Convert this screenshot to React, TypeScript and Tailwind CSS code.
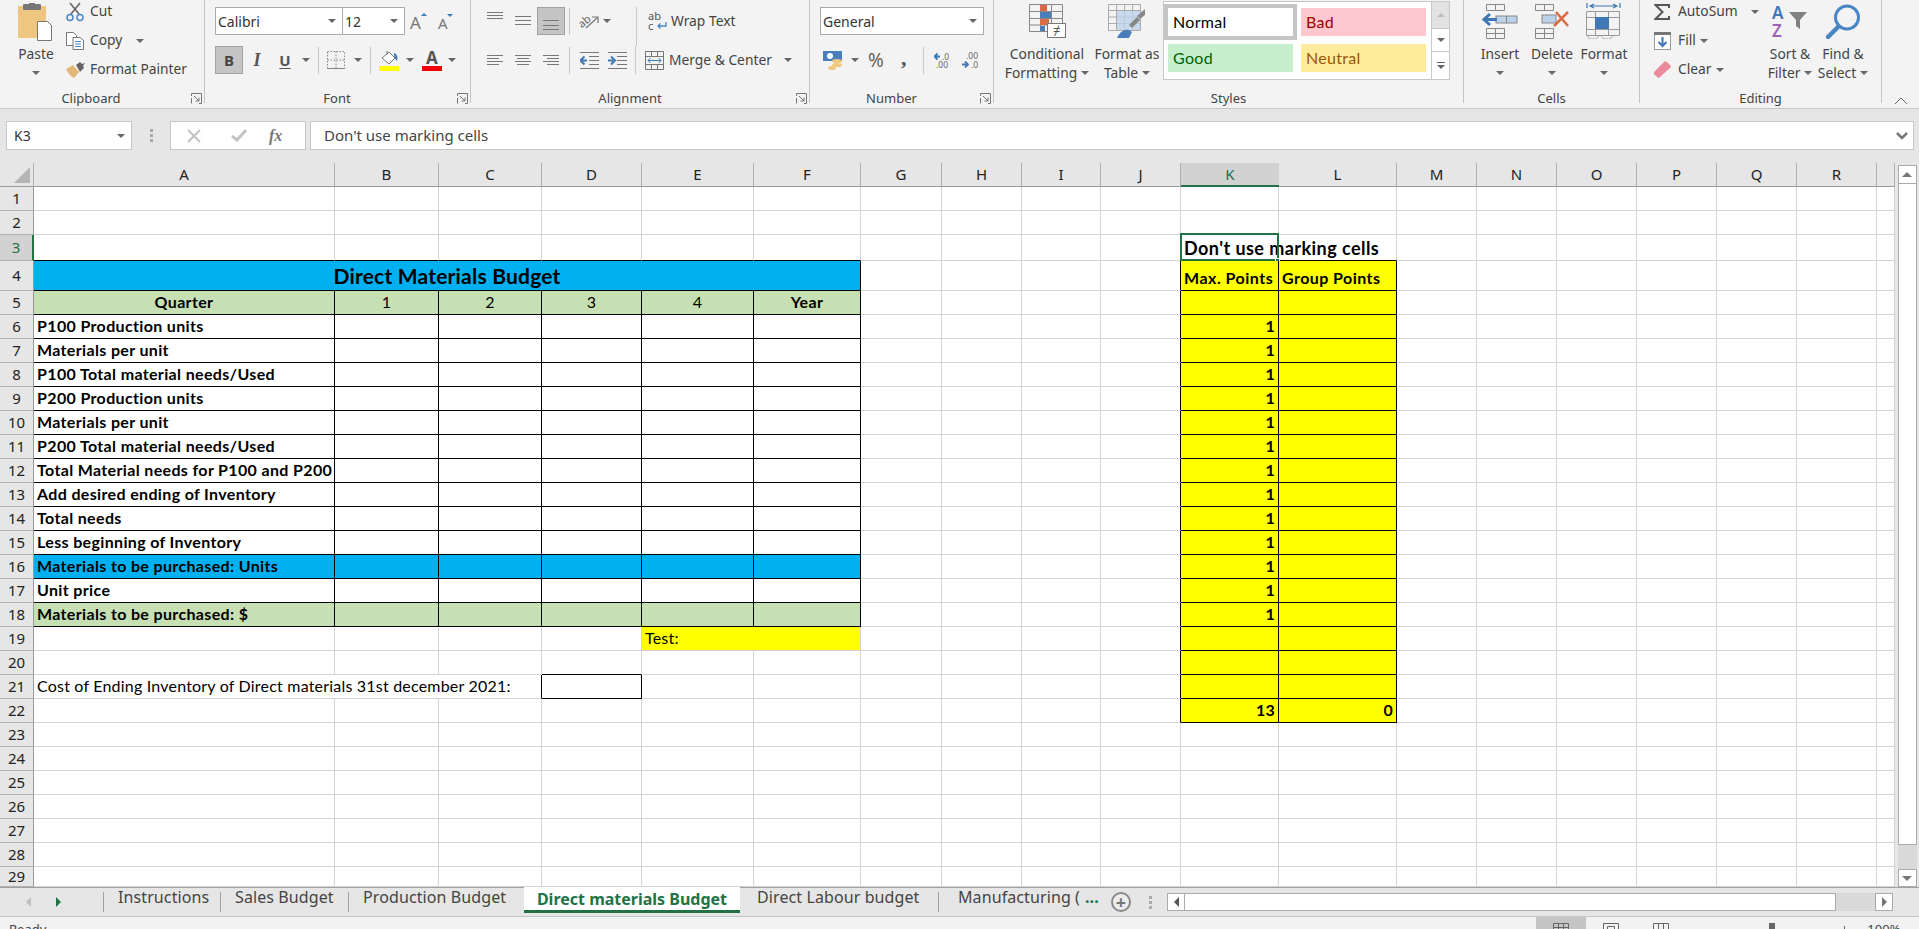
import type { ReactNode } from 'react';

const gridCols = ['A', 'B', 'C', 'D', 'E', 'F', 'G', 'H', 'I', 'J', 'K', 'L', 'M', 'N', 'O', 'P', 'Q', 'R', ''];
const rowNums = Array.from({ length: 29 }, (_, i) => i + 1);

const labels: Record<number, string> = {
  6: 'P100 Production units',
  7: 'Materials per unit',
  8: 'P100 Total material needs/Used',
  9: 'P200 Production units',
  10: 'Materials per unit',
  11: 'P200 Total material needs/Used',
  12: 'Total Material needs for P100 and P200',
  13: 'Add desired ending of Inventory',
  14: 'Total needs',
  15: 'Less beginning of Inventory',
  16: 'Materials to be purchased: Units',
  17: 'Unit price',
  18: 'Materials to be purchased: $',
};

const boxed = (r: number, c: number) =>
  (r >= 4 && r <= 18 && c >= 0 && c <= 5) || (r >= 4 && r <= 22 && (c === 10 || c === 11)) || (r === 21 && c === 3);

function Caret({ className = '' }: { className?: string }) {
  return <span className={`inline-block h-0 w-0 border-x-[4px] border-t-[4px] border-x-transparent border-t-[#666] ${className}`} />;
}

function Group({ className, label, labelClass = '', launcher = true, children }: { className: string; label: string; labelClass?: string; launcher?: boolean; children: ReactNode }) {
  return (
    <div className={`flex h-[103px] shrink-0 flex-col border-r border-[#c4c4c4] ${className}`}>
      <div className="h-[90px]">{children}</div>
      <div className="flex h-[13px] items-center pt-[3px] text-[13px] leading-none text-[#444]">
        <span className={`flex-1 text-center ${labelClass}`}>{label}</span>
        {launcher && (
          <svg width="11" height="11" viewBox="0 0 11 11" className="mr-[2px]" fill="none" stroke="#777">
            <path d="M.5 3V.5h10v10H8M.5 5v5.5H.5" />
            <path d="M3 3l5 5M8 4.5V8H4.5" />
          </svg>
        )}
      </div>
    </div>
  );
}

function Sep({ className = 'h-[27px]' }: { className?: string }) {
  return <div className={`w-px shrink-0 bg-[#c8c8c8] ${className}`} />;
}

function Combo({ className, text }: { className: string; text: string }) {
  return (
    <div className={`flex h-[28px] items-center justify-between border border-[#ababab] bg-white pl-[2px] pr-[6px] text-[14px] text-[#333] ${className}`}>
      <span>{text}</span>
      <Caret />
    </div>
  );
}

function Btn({ className = 'w-[28px]', children }: { className?: string; children: ReactNode }) {
  return <div className={`flex h-[28px] shrink-0 items-center justify-center ${className}`}>{children}</div>;
}

function SmallCmd({ icon, text, caret, caretClass = 'ml-[5px]', className = '' }: { icon: ReactNode; text: string; caret?: boolean; caretClass?: string; className?: string }) {
  return (
    <div className={`flex h-[29px] items-center whitespace-nowrap text-[13.8px] text-[#444] ${className}`}>
      <span className="flex w-[24px] shrink-0 items-center">{icon}</span>
      <span>{text}</span>
      {caret && <Caret className={caretClass} />}
    </div>
  );
}

function BigBtn({ className, icon, line1, line2, caret = true }: { className: string; icon: ReactNode; line1: string; line2?: string; caret?: boolean }) {
  return (
    <div className={`flex shrink-0 flex-col items-center text-[13.8px] leading-[19px] text-[#444] ${className}`}>
      <div className="flex h-[44px] items-start justify-center pt-[4px]">{icon}</div>
      <div className="whitespace-nowrap">{line1}</div>
      <div className="flex h-[19px] items-center gap-[4px] whitespace-nowrap">
        {line2 && <span>{line2}</span>}
        {caret && <Caret />}
      </div>
    </div>
  );
}

const vLines = { top: [3.5, 6.5, 9.5], mid: [7.5, 11.5, 15.5], bot: [11.5, 16.5, 20.5] };

function VAlignIcon({ kind }: { kind: 'top' | 'mid' | 'bot' }) {
  return (
    <svg width="18" height="24" viewBox="0 0 18 24" stroke="#777">
      {vLines[kind].map((y) => (
        <line key={y} x1="1" x2="17" y1={y} y2={y} />
      ))}
    </svg>
  );
}

function HAlignIcon({ kind }: { kind: 'left' | 'center' | 'right' }) {
  return (
    <svg width="16" height="11" viewBox="0 0 16 11" stroke="#777">
      {[0.5, 3.5, 6.5, 9.5].map((y, i) => {
        const short = i % 2 === 1;
        const x1 = kind === 'left' ? 0 : kind === 'center' ? (short ? 2 : 0) : short ? 4 : 0;
        const x2 = kind === 'left' ? (short ? 12 : 16) : kind === 'center' ? (short ? 14 : 16) : 16;
        return <line key={y} x1={x1} x2={x2} y1={y} y2={y} />;
      })}
    </svg>
  );
}

function IndentIcon({ flip }: { flip?: boolean }) {
  return (
    <svg width="19" height="17" viewBox="0 0 19 17" fill="none">
      <path d="M0 .5h19M9 4.5h10M9 8.5h10M9 12.5h10M0 16.5h19" stroke="#777" />
      {flip ? <path d="M0 8.5h5M3 4.5l4 4-4 4" stroke="#3f78b5" strokeWidth="2" /> : <path d="M7 8.5H2M4.5 4.5l-4 4 4 4" stroke="#3f78b5" strokeWidth="2" />}
    </svg>
  );
}

function ClipboardGroup() {
  return (
    <Group className="w-[205px]" label="Clipboard" labelClass="pr-[9px]">
      <div className="flex">
        <div className="flex w-[66px] flex-col items-center pl-[6px] pt-[3px] text-[13.8px] text-[#444]">
          <svg width="36" height="38" viewBox="0 0 36 38">
            <rect x="0" y="3" width="28" height="32" fill="#eec67f" />
            <rect x="5" y="1" width="18" height="6" rx="1" fill="#777" />
            <rect x="11" y="0" width="6" height="3" fill="#777" />
            <path d="M19.5 18.5h10l4 4v15h-14z" fill="#fff" stroke="#777" />
          </svg>
          <span className="mt-[3px] leading-[19px]">Paste</span>
          <Caret className="mt-[8px]" />
        </div>
        <div className="-mt-[3px]">
          <SmallCmd
            text="Cut"
            icon={
              <svg width="18" height="20" viewBox="0 0 18 20" fill="none">
                <path d="M5 12L14 1M13 12L4 1" stroke="#666" strokeWidth="1.6" />
                <circle cx="4" cy="15.5" r="3" stroke="#4a86c5" strokeWidth="1.5" />
                <circle cx="14" cy="15.5" r="3" stroke="#4a86c5" strokeWidth="1.5" />
              </svg>
            }
          />
          <SmallCmd
            text="Copy"
            caret
            caretClass="ml-[14px]"
            icon={
              <svg width="18" height="18" viewBox="0 0 18 18" fill="none">
                <path d="M7 13.5H.5V.5h7l3 3v2" stroke="#777" fill="#fff" />
                <path d="M7 5.5h7l3.5 3v9H7z" fill="#fff" stroke="#777" />
                <path d="M9 9.5h6M9 12h6M9 14.5h6" stroke="#4a86c5" />
              </svg>
            }
          />
          <SmallCmd
            text="Format Painter"
            icon={
              <svg width="19" height="16" viewBox="0 0 19 16">
                <path d="M0 7l7-4 6 7-5 6C5 15 2 11 0 7z" fill="#e3b877" />
                <path d="M10 3l4-3 2 2 3-1-2 3 1 2-4 4z" fill="#666" />
              </svg>
            }
          />
        </div>
      </div>
    </Group>
  );
}

function FontGroup() {
  return (
    <Group className="w-[266px] pl-[10px]" label="Font" labelClass="pl-[2px]">
      <div className="flex items-center pt-[7px]">
        <Combo className="w-[128px]" text="Calibri" />
        <Combo className="-ml-px w-[63px]" text="12" />
        <svg width="20" height="20" viewBox="0 0 20 20" className="ml-[5px]">
          <text x="0" y="18" fontSize="17" fill="#777" fontFamily="Noto Sans">A</text>
          <path d="M11 5l3-3 3 3z" fill="#3f78b5" />
        </svg>
        <svg width="20" height="20" viewBox="0 0 20 20" className="ml-[7px]">
          <text x="1" y="18" fontSize="15" fill="#777" fontFamily="Noto Sans">A</text>
          <path d="M10 3l3 3 3-3z" fill="#3f78b5" />
        </svg>
      </div>
      <div className="mt-[11px] flex items-center">
        <div className="flex h-[28px] w-[28px] items-center justify-center border border-[#a2a2a2] bg-[#c5c5c5] text-[15px] font-bold text-[#444]">B</div>
        <Btn><span className="font-['Liberation_Serif',serif] text-[18px] font-bold italic text-[#555]">I</span></Btn>
        <Btn><span className="text-[15px] font-bold text-[#555] underline underline-offset-2">U</span></Btn>
        <Caret className="ml-[3px]" />
        <Sep className="ml-[8px] h-[27px]" />
        <svg width="18" height="18" viewBox="0 0 18 18" fill="none" stroke="#888" className="ml-[8px]">
          <path d="M.5.5h17v17H.5zM9 .5v17M.5 9h17" strokeDasharray="1.5 1.5" />
          <path d="M.5 17.5h17" />
        </svg>
        <Caret className="ml-[9px]" />
        <Sep className="ml-[8px] h-[27px]" />
        <div className="ml-[8px] flex w-[20px] flex-col items-center">
          <svg width="20" height="15" viewBox="0 0 20 15" fill="none">
            <path d="M3 8l7-6 6 6-6 6z" stroke="#777" fill="#fff" />
            <path d="M8 1v4" stroke="#777" />
            <path d="M15 3c3 1 4 4 3 8-1-1-3-3-3-8z" fill="#3f78b5" />
          </svg>
          <div className="mt-[1px] h-[5px] w-[20px] bg-[#ffff00]" />
        </div>
        <Caret className="ml-[7px]" />
        <div className="ml-[8px] flex w-[20px] flex-col items-center">
          <span className="text-[17px] font-bold leading-[15px] text-[#555]">A</span>
          <div className="mt-[1px] h-[5px] w-[20px] bg-[#f00000]" />
        </div>
        <Caret className="ml-[6px]" />
      </div>
    </Group>
  );
}

function AlignmentGroup() {
  return (
    <Group className="w-[339px] pl-[10px]" label="Alignment" labelClass="pr-[17px]">
      <div className="mt-[7px] flex h-[28px] items-center">
        <Btn><VAlignIcon kind="top" /></Btn>
        <Btn><VAlignIcon kind="mid" /></Btn>
        <Btn className="w-[28px] border border-[#a2a2a2] bg-[#c5c5c5]"><VAlignIcon kind="bot" /></Btn>
        <Sep className="ml-[4px] h-[27px]" />
        <Btn className="ml-[5px] w-[28px]">
          <svg width="20" height="17" viewBox="0 0 20 17" fill="none">
            <text x="0" y="12" fontSize="11" fill="#666" fontFamily="Noto Sans" transform="rotate(-40 6 10)">ab</text>
            <path d="M7 15L18 5M13 4h6v6" stroke="#777" strokeWidth="1.2" />
          </svg>
        </Btn>
        <Caret />
        <Sep className="ml-[25px] h-[39px] self-start" />
        <div className="ml-[11px] flex items-center text-[13.8px] text-[#444]">
          <svg width="21" height="20" viewBox="0 0 21 20" className="mr-[2px]" fill="none">
            <text x="0" y="9" fontSize="11" fill="#555" fontFamily="Noto Sans">ab</text>
            <text x="0" y="19" fontSize="11" fill="#555" fontFamily="Noto Sans">c</text>
            <path d="M18 11v4h-8M12.5 12.500L10 15l2.500 2.500" stroke="#4a86c5" strokeWidth="1.3" />
          </svg>
          Wrap Text
        </div>
      </div>
      <div className="mt-[11px] flex h-[28px] items-center">
        <Btn><HAlignIcon kind="left" /></Btn>
        <Btn><HAlignIcon kind="center" /></Btn>
        <Btn><HAlignIcon kind="right" /></Btn>
        <Sep className="ml-[4px] h-[27px]" />
        <Btn className="ml-[5px] w-[28px]"><IndentIcon /></Btn>
        <Btn><IndentIcon flip /></Btn>
        <Sep className="ml-[4px] h-[28px]" />
        <div className="ml-[9px] flex items-center text-[13.8px] text-[#444]">
          <svg width="19" height="19" viewBox="0 0 19 19" fill="none" className="mr-[5px]">
            <path d="M.5.5h18v18H.5zM.5 5.5h18M.5 13.5h18M6.5.5v5M12.5.5v5M6.5 13.5v5M12.5 13.5v5" stroke="#777" />
            <path d="M3 9.5h13M5.5 7L3 9.5 5.5 12M13.5 7l2.5 2.5-2.5 2.5" stroke="#3f78b5" />
          </svg>
          Merge &amp; Center
          <Caret className="ml-[12px]" />
        </div>
      </div>
    </Group>
  );
}

function NumberGroup() {
  return (
    <Group className="w-[184px] pl-[10px]" label="Number" labelClass="pr-[17px]">
      <div className="pt-[7px]">
        <Combo className="w-[164px]" text="General" />
      </div>
      <div className="mt-[11px] flex h-[28px] items-center">
        <svg width="20" height="19" viewBox="0 0 20 19" className="ml-[3px]">
          <rect x="0" y="0" width="19" height="10" fill="#4a7ebb" />
          <ellipse cx="7" cy="5" rx="3" ry="3" fill="#fff" />
          <ellipse cx="14" cy="14" rx="5" ry="2" fill="#edc87e" />
          <ellipse cx="14" cy="10" rx="5" ry="2" fill="#edc87e" />
          <ellipse cx="9" cy="17" rx="4" ry="2" fill="#edc87e" />
        </svg>
        <Caret className="ml-[8px]" />
        <span className="ml-[9px] w-[18px] text-[19px] leading-none text-[#666]">%</span>
        <span className="-mt-[5px] ml-[15px] w-[6px] font-['Liberation_Serif',serif] text-[22px] font-bold leading-none text-[#555]">,</span>
        <Sep className="ml-[16px] h-[27px]" />
        <svg width="17" height="16" viewBox="0 0 17 16" className="ml-[10px]">
          <path d="M1 4.5h5M3.5 1.5L.5 4.5l3 3" fill="none" stroke="#3f78b5" strokeWidth="1.8" />
          <text x="8" y="8" fontSize="8.5" fill="#666" fontFamily="Noto Sans">.0</text>
          <text x="2" y="16" fontSize="8.5" fill="#666" fontFamily="Noto Sans">.00</text>
        </svg>
        <svg width="17" height="16" viewBox="0 0 17 16" className="ml-[11px]">
          <text x="4" y="7" fontSize="8.5" fill="#666" fontFamily="Noto Sans">.00</text>
          <path d="M0 12.5h5M3 9.5l3 3-3 3" fill="none" stroke="#3f78b5" strokeWidth="1.8" />
          <text x="9" y="16" fontSize="8.5" fill="#666" fontFamily="Noto Sans">.0</text>
        </svg>
      </div>
    </Group>
  );
}

function StyleCell({ className, text }: { className: string; text: string }) {
  return <div className={`flex h-[28px] w-[125px] items-center pl-[5px] font-['Lato',sans-serif] text-[16px] tracking-[0.3px] ${className}`}>{text}</div>;
}

function StylesGroup() {
  return (
    <Group className="w-[470px]" label="Styles" launcher={false}>
      <div className="flex pl-[6px]">
        <BigBtn
          className="w-[94px]"
          line1="Conditional"
          line2="Formatting"
          icon={
            <svg width="37" height="36" viewBox="0 0 37 36" fill="none">
              <path d="M.5.5h33v27H.5zM.5 7.5h33M.5 14.5h33M.5 21h33M11.5.5v27M22.5.5v27" stroke="#888" />
              <rect x="11" y="1" width="7" height="6" fill="#dc6a45" />
              <rect x="11" y="8" width="11" height="6" fill="#4a7ebb" />
              <rect x="11" y="15" width="9" height="6" fill="#dc6a45" />
              <rect x="11" y="22" width="5" height="5" fill="#4a7ebb" />
              <rect x="18.5" y="19.5" width="18" height="14" fill="#fff" stroke="#777" />
              <text x="24" y="31" fontSize="13" fill="#555" fontFamily="Noto Sans">≠</text>
            </svg>
          }
        />
        <BigBtn
          className="w-[66px]"
          line1="Format as"
          line2="Table"
          icon={
            <svg width="38" height="36" viewBox="0 0 38 36" fill="none">
              <path d="M.5.5h32v26H.5zM.5 6.5h32M.5 13h32M.5 19.5h32M8.5.5v26M16.5.5v26M24.5.5v26" stroke="#aaa" />
              <rect x="9" y="7" width="23" height="19" fill="#bcd2e9" opacity="0.8" />
              <path d="M9 34c3-7 8-9 12-8l3 2-3 6z" fill="#4a7ebb" />
              <path d="M21 21l8-8 3 3-8 8zM29 12l8-7v6l-5 4z" fill="#888" />
            </svg>
          }
        />
        <div className="ml-[3px] mt-[1px] flex h-[79px] w-[287px] border border-[#c8c8c8] bg-white">
          <div className="grid grid-cols-[133px_125px] content-start gap-x-[4px] pt-[2px]">
            <div className="flex h-[36px] items-center border-4 border-[#c5c5c5] pl-[5px] font-['Lato',sans-serif] text-[16px] tracking-[0.3px] text-black">Normal</div>
            <StyleCell className="mt-[4px] bg-[#ffc7ce] text-[#9c0006]" text="Bad" />
            <StyleCell className="ml-[4px] mt-[4px] bg-[#c6efce] text-[#006100]" text="Good" />
            <StyleCell className="mt-[4px] bg-[#ffeb9c] text-[#9c5700]" text="Neutral" />
          </div>
          <div className="ml-auto flex w-[18px] flex-col border-l border-[#c8c8c8]">
            <div className="flex h-[26px] items-center justify-center bg-[#e2e2e2]">
              <span className="h-0 w-0 border-x-[4px] border-b-[4px] border-x-transparent border-b-[#bbb]" />
            </div>
            <div className="flex h-[24px] items-center justify-center border-y border-[#c8c8c8]"><Caret /></div>
            <div className="flex flex-1 flex-col items-center justify-center gap-[2px]">
              <div className="h-px w-[8px] bg-[#666]" />
              <Caret />
            </div>
          </div>
        </div>
      </div>
    </Group>
  );
}

function CellsGroup() {
  return (
    <Group className="w-[176px]" label="Cells" launcher={false}>
      <div className="flex pl-[10px]">
        <BigBtn
          className="w-[52px]"
          line1="Insert"
          icon={
            <svg width="36" height="35" viewBox="0 0 36 35" fill="none">
              <path d="M4.5.5h18v6h-18zM13.5.5v6M4.5 24.5h18v10h-18zM4.5 29.5h18M13.5 24.5v10" stroke="#888" />
              <rect x="14" y="12" width="21" height="7" fill="#bcd2e9" stroke="#888" />
              <path d="M24.5 12v7" stroke="#888" />
              <path d="M15 15.5H3M8 10l-6 5.5L8 21" stroke="#3f78b5" strokeWidth="3" />
            </svg>
          }
        />
        <BigBtn
          className="w-[52px]"
          line1="Delete"
          icon={
            <svg width="36" height="35" viewBox="0 0 36 35" fill="none">
              <path d="M1.5.5h18v6h-18zM10.5.5v6M1.5 24.5h18v10h-18zM1.5 29.5h18M10.5 24.5v10" stroke="#888" />
              <rect x="8" y="11" width="14" height="8" fill="#bcd2e9" stroke="#888" />
              <path d="M22 8l12 14M34 8L20 22" stroke="#dc6a45" strokeWidth="2.5" />
            </svg>
          }
        />
        <BigBtn
          className="w-[52px]"
          line1="Format"
          icon={
            <svg width="36" height="36" viewBox="0 0 36 36" fill="none" className="-mt-[1px]">
              <path d="M1 0v5M34 0v5M4 3h27M8 1L4 3l4 2M27 1l4 2-4 2" stroke="#3f78b5" strokeWidth="1.2" />
              <path d="M.5 8.5h33v24H.5zM.5 14.5h33M.5 26.5h33M9.5 8.5v24M22.5 8.5v24" stroke="#999" />
              <rect x="9" y="14" width="14" height="12" fill="#3f78b5" />
              <path d="M1 33l3 3h6l3-3M15 33l3 3h6l3-3" stroke="#aaa" />
            </svg>
          }
        />
      </div>
    </Group>
  );
}

function EditingGroup() {
  return (
    <Group className="w-[242px]" label="Editing" launcher={false}>
      <div className="flex pl-[14px]">
        <div className="-mt-[3px] w-[110px]">
          <SmallCmd
            text="AutoSum"
            caret
            caretClass="ml-[13px]"
            icon={
              <svg width="16" height="16" viewBox="0 0 16 16" fill="none">
                <path d="M15 4V1H1.5l7 7-7 7H15v-3" stroke="#555" strokeWidth="2" />
              </svg>
            }
          />
          <SmallCmd
            text="Fill"
            caret
            caretClass="ml-[4px]"
            icon={
              <svg width="17" height="18" viewBox="0 0 17 18" fill="none">
                <rect x=".5" y=".5" width="16" height="17" fill="#fff" stroke="#999" />
                <rect x="0" y="0" width="17" height="3" fill="#777" />
                <path d="M8.5 5v9M4.5 10l4 4 4-4" stroke="#3f78b5" strokeWidth="2" />
              </svg>
            }
          />
          <SmallCmd
            text="Clear"
            caret
            caretClass="ml-[4px]"
            icon={
              <svg width="17" height="17" viewBox="0 0 17 17">
                <path d="M0 11L10 1c1-1 2-1 3 0l3 3c1 1 1 2 0 3L6 16c-1 1-2 1-3 0L0 13c-.5-.5-.5-1.500 0-2z" fill="#ea8a9a" />
              </svg>
            }
          />
        </div>
        <BigBtn
          className="w-[52px]"
          line1="Sort &"
          line2="Filter"
          icon={
            <svg width="36" height="34" viewBox="0 0 36 34">
              <text x="0" y="15" fontSize="17" fontWeight="600" fill="#3f78b5" fontFamily="Noto Sans">A</text>
              <text x="0" y="33" fontSize="17" fontWeight="600" fill="#9a63b5" fontFamily="Noto Sans">Z</text>
              <path d="M17 8h18l-7 8v9l-4-3v-6z" fill="#808080" />
            </svg>
          }
        />
        <BigBtn
          className="w-[54px]"
          line1="Find &"
          line2="Select"
          icon={
            <svg width="35" height="35" viewBox="0 0 35 35" fill="none">
              <circle cx="21" cy="13.500" r="11.500" stroke="#4a86c5" strokeWidth="3" />
              <path d="M12 23L2 33" stroke="#4a86c5" strokeWidth="4.500" strokeLinecap="round" />
            </svg>
          }
        />
      </div>
    </Group>
  );
}

function Ribbon() {
  return (
    <div className="flex h-[109px] overflow-hidden border-b border-[#c6c6c6] bg-[#f3f3f3]">
      <ClipboardGroup />
      <FontGroup />
      <AlignmentGroup />
      <NumberGroup />
      <StylesGroup />
      <CellsGroup />
      <EditingGroup />
      <div className="flex flex-1 items-end justify-center pb-[3px]">
        <svg width="14" height="8" viewBox="0 0 14 8" fill="none" stroke="#666"><path d="M1 7l6-6 6 6" /></svg>
      </div>
    </div>
  );
}

function FormulaBar() {
  return (
    <div className="flex h-[54px] bg-[#e6e6e6] pl-[6px] pr-[5px] pt-[12px]">
      <div className="flex h-[29px] w-[126px] items-center justify-between border border-[#c6c6c6] bg-white pl-[7px] pr-[6px] text-[14px] text-[#333]">
        K3
        <Caret />
      </div>
      <div className="flex h-[29px] w-[38px] flex-col items-center justify-center gap-[2px]">
        <div className="h-[3px] w-[3px] bg-[#aaa]" />
        <div className="h-[3px] w-[3px] bg-[#aaa]" />
        <div className="h-[3px] w-[3px] bg-[#aaa]" />
      </div>
      <div className="flex h-[29px] w-[136px] items-center border border-[#c6c6c6] bg-white">
        <svg width="14" height="14" viewBox="0 0 14 14" className="ml-[16px]" stroke="#c4c4c4" strokeWidth="2"><path d="M1 1l12 12M13 1L1 13" /></svg>
        <svg width="16" height="13" viewBox="0 0 16 13" className="ml-[30px]" fill="none" stroke="#c4c4c4" strokeWidth="3"><path d="M1 7l5 4 9-10" /></svg>
        <span className="ml-[22px] font-['Liberation_Serif',serif] text-[16px] font-bold italic text-[#777]">fx</span>
      </div>
      <div className="ml-[4px] flex h-[29px] flex-1 items-center justify-between border border-[#c6c6c6] bg-white pl-[13px] pr-[5px] text-[15px] text-[#444]">
        Don't use marking cells
        <svg width="12" height="8" viewBox="0 0 12 8" fill="none" stroke="#777" strokeWidth="2.500"><path d="M1 1l5 5 5-5" /></svg>
      </div>
    </div>
  );
}

function ColHeader({ name }: { name: string }) {
  const selected = name === 'K';
  return (
    <div
      className={`flex items-center justify-center border-b text-[15px] ${
        selected ? 'border-b-2 border-b-[#217346] bg-[#d2d2d2] text-[#217346]' : 'border-b-[#9a9a9a] bg-[#e6e6e6] text-[#222]'
      }`}
    >
      <span className={`flex h-full w-full items-center justify-center ${selected ? '' : 'border-r border-r-[#b0b0b0]'}`}>{name}</span>
    </div>
  );
}

function Cell({ r, c, span = 1 }: { r: number; c: number; span?: number }) {
  const last = c + span - 1;
  const blackR = boxed(r, last) || boxed(r, last + 1);
  const blackB = boxed(r, c) || boxed(r + 1, c);
  let bg = 'bg-white';
  if (r === 4 && c <= 5) bg = 'bg-[#00b0f0]';
  if (r === 5 && c <= 5) bg = 'bg-[#c6e0b4]';
  if (r === 16 && c <= 5) bg = 'bg-[#00b0f0]';
  if (r === 18 && c <= 5) bg = 'bg-[#c6e0b4]';
  if (boxed(r, c) && c >= 10) bg = 'bg-[#ffff00]';
  if (r === 19 && c === 4) bg = 'bg-[#ffff00]';

  const bold = 'font-bold tracking-[0.35px]';
  let text: ReactNode = null;
  let align = 'justify-start pl-[3px]';
  if (r === 4 && c === 0) {
    text = <span className="mt-[2px] text-[21px] font-bold tracking-[0.2px]">Direct Materials Budget</span>;
    align = 'justify-center';
  } else if (r === 5 && c === 0) {
    text = <span className={bold}>Quarter</span>;
    align = 'justify-center';
  } else if (r === 5 && c >= 1 && c <= 4) {
    text = String(c);
    align = 'justify-center';
  } else if (r === 5 && c === 5) {
    text = <span className={bold}>Year</span>;
    align = 'justify-center';
  } else if (c === 0 && labels[r]) {
    text = <span className={bold}>{labels[r]}</span>;
  } else if (r === 19 && c === 4) {
    text = 'Test:';
  } else if (r === 21 && c === 0) {
    text = 'Cost of Ending Inventory of Direct materials 31st december 2021:';
  } else if (r === 3 && c === 10) {
    text = <span className="mt-[2px] text-[18px] font-bold tracking-[0.45px]">Don't use marking cells</span>;
  } else if (r === 4 && c === 10) {
    text = <span className="mt-[6px] font-bold tracking-[0.5px]">Max. Points</span>;
  } else if (r === 4 && c === 11) {
    text = <span className="mt-[6px] font-bold tracking-[0.45px]">Group Points</span>;
  } else if (c === 10 && r >= 6 && r <= 18) {
    text = <span className="font-bold">1</span>;
    align = 'justify-end pr-[3px]';
  } else if (r === 22 && c === 10) {
    text = <span className="font-bold">13</span>;
    align = 'justify-end pr-[3px]';
  } else if (r === 22 && c === 11) {
    text = <span className="font-bold">0</span>;
    align = 'justify-end pr-[3px]';
  }

  return (
    <div
      className={`relative flex items-center overflow-visible whitespace-nowrap border-b border-r pb-[2px] font-['Lato',sans-serif] text-[16px] leading-none tracking-[0.2px] text-black ${bg} ${align} ${
        blackR ? 'border-r-black' : 'border-r-[#d4d4d4]'
      } ${blackB ? 'border-b-black' : 'border-b-[#d4d4d4]'} ${
        span === 6 ? 'col-span-6' : span === 3 ? 'col-span-3' : span === 2 ? 'col-span-2' : ''
      }`}
    >
      {text}
      {r === 3 && c === 10 && (
        <>
          {/* selection box over K3, only as wide as column K */}
          <div className="pointer-events-none absolute left-[-1px] top-[-2px] h-[28px] w-[99px] border-2 border-[#217346]" />
          <div className="absolute left-[94px] top-[23px] h-[5px] w-[5px] border border-white bg-[#217346]" />
        </>
      )}
    </div>
  );
}

function SheetGrid() {
  const cells: ReactNode[] = [];
  for (const r of rowNums) {
    const selected = r === 3;
    cells.push(
      <div
        key={`h${r}`}
        className={`flex items-center justify-center border-b text-[15px] ${
          selected ? 'border-r-2 border-b-[#b0b0b0] border-r-[#217346] bg-[#d2d2d2] text-[#217346]' : 'border-r border-b-[#b0b0b0] border-r-[#9a9a9a] bg-[#e6e6e6] text-[#222]'
        }`}
      >
        {r}
      </div>,
    );
    for (let c = 0; c < 19; c++) {
      if (r === 4 && c === 0) {
        cells.push(<Cell key={`${r}-${c}`} r={r} c={c} span={6} />);
        c += 5;
      } else if (r === 21 && c === 0) {
        cells.push(<Cell key={`${r}-${c}`} r={r} c={c} span={3} />);
        c += 2;
      } else if (r === 19 && c === 4) {
        cells.push(<Cell key={`${r}-${c}`} r={r} c={c} span={2} />);
        c += 1;
      } else if (r === 3 && c === 10) {
        cells.push(<Cell key={`${r}-${c}`} r={r} c={c} span={2} />);
        c += 1;
      } else {
        cells.push(<Cell key={`${r}-${c}`} r={r} c={c} />);
      }
    }
  }

  return (
    <div className="grid h-[724px] w-[1895px] shrink-0 grid-cols-[34px_301px_104px_103px_100px_112px_107px_81px_80px_79px_80px_98px_118px_80px_80px_80px_80px_80px_80px_18px] grid-rows-[24px_24px_24px_26px_30px_repeat(24,24px)_20px] overflow-hidden">
      <div className="flex items-end justify-end border-b border-r border-b-[#9a9a9a] border-r-[#b0b0b0] bg-[#e6e6e6] pb-[3px] pr-[3px]">
        <span className="h-0 w-0 border-b-[16px] border-l-[16px] border-b-[#b5b5b5] border-l-transparent" />
      </div>
      {gridCols.map((name, i) => (
        <ColHeader key={i} name={name} />
      ))}
      {cells}
    </div>
  );
}

function VScroll() {
  return (
    <div className="flex h-[724px] flex-1 flex-col items-center bg-[#e6e6e6] pl-[2px] pr-[2px] pt-[2px]">
      <div className="flex h-[19px] w-[19px] items-center justify-center border border-[#ababab] bg-white">
        <span className="h-0 w-0 border-x-[5px] border-b-[5px] border-x-transparent border-b-[#777]" />
      </div>
      <div className="h-[661px] w-[19px] border-x border-b border-[#ababab] bg-white" />
      <div className="h-[24px] w-[19px] bg-[#d9d9d9]" />
      <div className="flex h-[18px] w-[19px] items-center justify-center border border-[#ababab] bg-white">
        <Caret className="border-x-[5px] border-t-[5px] border-t-[#777]" />
      </div>
    </div>
  );
}

function SheetTab({ className, text }: { className: string; text: string }) {
  return <div className={`flex h-[20px] shrink-0 items-center whitespace-nowrap pb-[10px] pl-[14px] text-[16px] tracking-[0.1px] text-[#444] ${className}`}>{text}</div>;
}

function TabBar() {
  return (
    <div className="flex h-[30px] items-center border-b border-t border-b-[#c6c6c6] border-t-[#a0a0a0] bg-[#e6e6e6]">
      <div className="flex w-[103px] shrink-0 items-center pl-[26px]">
        <span className="h-0 w-0 border-y-[5px] border-r-[5px] border-y-transparent border-r-[#c0c0c0]" />
        <span className="ml-[25px] h-0 w-0 border-y-[5px] border-l-[5px] border-y-transparent border-l-[#217346]" />
      </div>
      <SheetTab className="w-[117px] border-l border-[#a0a0a0]" text="Instructions" />
      <SheetTab className="w-[128px] border-l border-[#a0a0a0]" text="Sales Budget" />
      <SheetTab className="w-[176px] border-l border-[#a0a0a0]" text="Production Budget" />
      <div className="-mt-px flex h-[26px] w-[216px] shrink-0 items-center justify-center self-start whitespace-nowrap border-b-[3px] border-[#217346] bg-white text-[16px] font-bold text-[#217346]">
        Direct materials Budget
      </div>
      <div className="flex h-[20px] w-[198px] shrink-0 items-center whitespace-nowrap pb-[10px] pl-[17px] text-[16px] tracking-[0.1px] text-[#444]">Direct Labour budget</div>
      <div className="flex h-[20px] w-[167px] shrink-0 items-center whitespace-nowrap border-l border-[#a0a0a0] pb-[10px] pl-[19px] text-[16px] tracking-[0.1px] text-[#444]">
        <span className="w-[124px] overflow-hidden">Manufacturing (</span>
        <span className="ml-[3px] font-bold text-[#217346]">...</span>
      </div>
      <div className="ml-[6px] flex h-[20px] w-[20px] shrink-0 items-center justify-center rounded-full border-2 border-[#8a8a8a] bg-[#ececec] text-[18px] font-bold leading-none text-[#777]">+</div>
      <div className="ml-[18px] flex flex-col gap-[2px]">
        <div className="h-[3px] w-[3px] bg-[#aaa]" />
        <div className="h-[3px] w-[3px] bg-[#aaa]" />
        <div className="h-[3px] w-[3px] bg-[#aaa]" />
      </div>
      <div className="ml-[15px] flex h-[18px] w-[726px] shrink-0 items-stretch">
        <div className="flex w-[18px] items-center justify-center border border-[#ababab] bg-white">
          <span className="h-0 w-0 border-y-[5px] border-r-[5px] border-y-transparent border-r-[#555]" />
        </div>
        <div className="w-[651px] border-y border-r border-[#ababab] bg-white" />
        <div className="w-[39px] bg-[#d9d9d9]" />
        <div className="flex w-[18px] items-center justify-center border border-[#ababab] bg-white">
          <span className="h-0 w-0 border-y-[5px] border-l-[5px] border-y-transparent border-l-[#777]" />
        </div>
      </div>
    </div>
  );
}

function StatusBar() {
  return (
    <div className="flex h-[12px] overflow-hidden bg-[#f1f1f1] text-[13px] text-[#444]">
      <span className="ml-[9px] mt-[4px] leading-[16px]">Ready</span>
      <div className="ml-[1490px] flex h-[12px] w-[50px] justify-center bg-[#c5c5c5] pt-[6px]">
        <svg width="16" height="14" viewBox="0 0 16 14" fill="none" stroke="#666"><path d="M.5.5h15v13H.5zM.5 4.500h15M5.500.5v13M10.500.5v13" /></svg>
      </div>
      <div className="flex h-[12px] w-[50px] justify-center pt-[6px]">
        <svg width="16" height="14" viewBox="0 0 16 14" fill="none" stroke="#666"><path d="M.5.5h15v13H.5zM4.500 3.500h7v7h-7z" /></svg>
      </div>
      <div className="flex h-[12px] w-[50px] justify-center pt-[6px]">
        <svg width="16" height="14" viewBox="0 0 16 14" fill="none" stroke="#666"><path d="M.5.5h15v13H.5zM5.500.5v13M10.500.5v13" /></svg>
      </div>
      <div className="ml-[83px] mt-[6px] h-[12px] w-[6px] bg-[#666]" />
      <div className="ml-[69px] mt-[9px] h-[6px] w-px bg-[#666]" />
      <span className="ml-[22px] mt-[4px] leading-[16px]">100%</span>
    </div>
  );
}

export default function App() {
  return (
    <div className="h-[929px] w-[1919px] overflow-hidden bg-[#e6e6e6] font-['Noto_Sans',sans-serif]">
      <Ribbon />
      <FormulaBar />
      <div className="flex">
        <SheetGrid />
        <VScroll />
      </div>
      <TabBar />
      <StatusBar />
    </div>
  );
}
